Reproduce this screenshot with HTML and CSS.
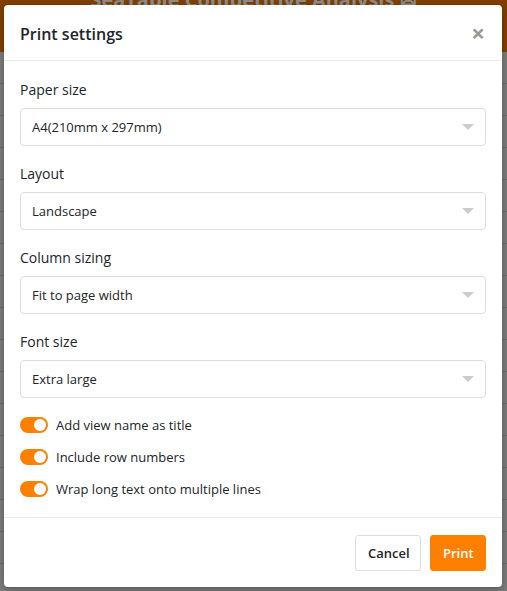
FILE: index.html
```html
<!DOCTYPE html>
<html>
<head>
<meta charset="utf-8">
<link rel="stylesheet" href="styles.css">
</head>
<body>
<div class="page">
  <div class="page-header"><span class="page-title">SeaTable Competitive Analysis ✉</span></div>
  <div class="page-rows"></div>
</div>
<div class="modal">
  <div class="modal-header">
    <h5 class="modal-title">Print settings</h5>
    <span class="close">×</span>
  </div>
  <div class="modal-body">
    <div class="field">
      <label class="label">Paper size</label>
      <div class="select"><span>A4(210mm x 297mm)</span><i class="caret"></i></div>
    </div>
    <div class="field">
      <label class="label">Layout</label>
      <div class="select"><span>Landscape</span><i class="caret"></i></div>
    </div>
    <div class="field">
      <label class="label">Column sizing</label>
      <div class="select"><span>Fit to page width</span><i class="caret"></i></div>
    </div>
    <div class="field">
      <label class="label">Font size</label>
      <div class="select"><span>Extra large</span><i class="caret"></i></div>
    </div>
    <div class="switches">
      <div class="switch"><span class="toggle"><i></i></span><span>Add view name as title</span></div>
      <div class="switch"><span class="toggle"><i></i></span><span>Include row numbers</span></div>
      <div class="switch"><span class="toggle"><i></i></span><span>Wrap long text onto multiple lines</span></div>
    </div>
  </div>
  <div class="modal-footer">
    <button class="btn btn-cancel">Cancel</button>
    <button class="btn btn-print">Print</button>
  </div>
</div>
</body>
</html>
```
FILE: styles.css
```css
* { box-sizing: border-box; }
html, body { margin: 0; padding: 0; }
body {
  width: 507px;
  height: 591px;
  overflow: hidden;
  background: #7b7b7b;
  font-family: "Open Sans", "Noto Sans", sans-serif;
  color: #212529;
  position: relative;
}
.page-header {
  height: 52px;
  background: #803f00;
  text-align: center;
  overflow: hidden;
}
.page-title {
  display: block;
  margin-top: -12px;
  font-size: 20px;
  font-weight: 700;
  color: #8c8c8c;
  line-height: 24px;
}
.page-rows {
  height: 539px;
  background: repeating-linear-gradient(to bottom, #7b7b7b 0, #7b7b7b 31px, #6a6a6a 31px, #6a6a6a 32px);
}
.modal {
  position: absolute;
  left: 4px;
  top: 5px;
  width: 498px;
  height: 582px;
  background: #fff;
  border-radius: 4px;
  box-shadow: 0 2px 6px rgba(0,0,0,0.3);
  display: flex;
  flex-direction: column;
}
.modal-header {
  height: 56px;
  border-bottom: 1px solid #e9ecef;
  display: flex;
  align-items: center;
  justify-content: space-between;
  padding: 2px 16px 0;
}
.modal-title {
  margin: 0;
  font-size: 16px;
  font-weight: 600;
  color: #212529;
}
.close {
  font-size: 24px;
  font-weight: 700;
  color: #999;
  line-height: 1;
  margin-top: -2px;
  margin-right: 1px;
}
.modal-body {
  flex: 1;
  padding: 19px 16px 0;
}
.field { margin-bottom: 18px; }
.label {
  display: block;
  font-size: 14px;
  line-height: 20px;
  margin-bottom: 8px;
}
.select {
  height: 38px;
  border: 1px solid #ddd;
  border-radius: 4px;
  display: flex;
  align-items: center;
  justify-content: space-between;
  padding: 0 11px;
  font-size: 13px;
}
.caret {
  width: 0; height: 0;
  border-left: 6px solid transparent;
  border-right: 6px solid transparent;
  border-top: 6px solid #ccc;
}
.switches { margin-top: -2px; display: flex; flex-direction: column; gap: 10px; }
.switch { display: flex; align-items: center; gap: 8px; font-size: 13px; line-height: 22px; }
.toggle {
  width: 28px; height: 16px;
  border-radius: 8px;
  background: #ff8000;
  display: flex;
  align-items: center;
  justify-content: flex-end;
  padding-right: 2px;
}
.toggle i { width: 12px; height: 12px; border-radius: 50%; background: #fff; display: block; }
.modal-footer {
  height: 70px;
  border-top: 1px solid #e9ecef;
  display: flex;
  justify-content: flex-end;
  align-items: center;
  gap: 9px;
  padding: 0 16px;
}
.btn {
  height: 36px;
  border-radius: 3px;
  font-family: inherit;
  font-size: 13px;
  font-weight: 600;
  padding: 0 12px;
}
.btn-cancel { background: #fff; border: 1px solid #ddd; color: #212529; width: 66px; }
.btn-print { background: #ff8000; border: 1px solid #ff8000; color: #fff; width: 56px; }
```
